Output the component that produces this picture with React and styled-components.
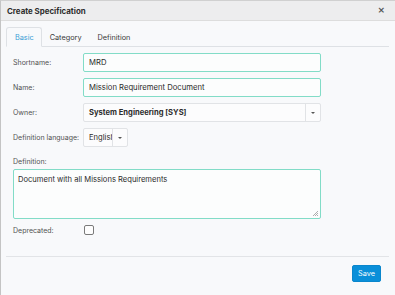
import styled, { createGlobalStyle } from 'styled-components';

const GlobalStyle = createGlobalStyle`
    html, body {
        margin: 0;
        padding: 0;
        background: #ffffff;
    }
    * {
        box-sizing: border-box;
    }
`;

const Dialog = styled.div`
    display: flex;
    flex-direction: column;
    width: 395px;
    height: 295px;
    overflow: hidden;

    background: #f8f9fb;
    border-left: 1px solid #c4c4c4;
    border-top: 1px solid #d0d0d0;

    font-family: Inter, 'Noto Sans', sans-serif;
    color: #333;
`;

const Header = styled.div`
    display: flex;
    justify-content: space-between;
    align-items: center;
    flex: 0 0 20px;
    padding: 0 10px 0 6px;

    background: #ededee;
    border-bottom: 1px solid #dddddd;
`;

const Title = styled.h1`
    margin: 0;
    font-size: 7.9px;
    font-weight: 700;
    color: #2d2d2d;
`;

const CloseButton = styled.button`
    padding: 0;
    background: none;
    border: none;
    font-family: 'DejaVu Sans', sans-serif;
    font-size: 9px;
    font-weight: 700;
    line-height: 1;
    color: #555;
`;

const Body = styled.div`
    flex: 1;
    padding: 6px 6px 0 5px;
`;

const TabList = styled.div`
    display: flex;
    height: 20px;
    border-bottom: 1px solid #dee1e5;
`;

const Tab = styled.div`
    display: flex;
    align-items: center;
    height: 20px;
    padding: 0 7px;
    margin-bottom: -1px;

    font-size: 7.3px;
    color: ${({ $active }) => ($active ? '#3a9fd6' : '#3a3a3a')};
    background: ${({ $active }) => ($active ? '#f8f9fb' : 'transparent')};
    border: 1px solid ${({ $active }) => ($active ? '#dee1e5' : 'transparent')};
    border-bottom-color: ${({ $active }) => ($active ? '#f8f9fb' : 'transparent')};
    border-radius: 3px 3px 0 0;

    &:first-child {
        padding-left: 8px;
    }
`;

const Form = styled.div`
    display: flex;
    flex-direction: column;
    gap: 6px;
    padding: 6px 0 0 7px;
    height: 209px;
`;

const Row = styled.div`
    display: flex;
    align-items: center;
`;

const Label = styled.label`
    flex: 0 0 70px;
    font-size: 7px;
    color: #525252;
    white-space: nowrap;
`;

const TextInput = styled.div`
    display: flex;
    align-items: center;
    width: 238px;
    height: 19px;
    padding: 0 5px;

    font-size: 7.7px;
    color: #2b2b2b;
    background: #fcfdfd;
    border: 1px solid #82dcc7;
    border-radius: 2px;
`;

const Select = styled.div`
    display: flex;
    align-items: stretch;
    width: ${({ $width }) => $width}px;
    height: 19px;

    background: #fcfcfd;
    border: 1px solid #e1e3e6;
    border-radius: 2px;
`;

const SelectValue = styled.div`
    flex: 1;
    display: flex;
    align-items: center;
    padding: 0 5px;
    overflow: hidden;
    white-space: nowrap;

    font-size: 7.6px;
    font-weight: ${({ $bold }) => ($bold ? 700 : 400)};
    color: #2b2b2b;
`;

const Caret = styled.div`
    display: flex;
    align-items: center;
    justify-content: center;
    flex: 0 0 15px;
    border-left: 1px solid #e1e3e6;

    &::after {
        content: '';
        border-left: 2.5px solid transparent;
        border-right: 2.5px solid transparent;
        border-top: 2.5px solid #555;
    }
`;

const DefinitionLabel = styled.div`
    margin-top: 4px;
    font-size: 7px;
    color: #525252;
`;

const TextArea = styled.div`
    position: relative;
    width: 308px;
    height: 50px;
    margin-top: -3px;
    padding: 5px 4px;

    font-size: 7.6px;
    color: #2b2b2b;
    background: #fcfdfd;
    border: 1px solid #82dcc7;
    border-radius: 2px;
`;

const ResizeGrip = styled.svg`
    position: absolute;
    right: 1px;
    bottom: 1px;
`;

const Checkbox = styled.div`
    width: 10px;
    height: 10px;
    margin-left: 1px;
    background: #fdfdfd;
    border: 1px solid #7a7a7a;
    border-radius: 2px;
`;

const Footer = styled.div`
    display: flex;
    justify-content: flex-end;
    padding: 8px 8px 0 0;
    border-top: 1px solid #e2e4e7;
`;

const SaveButton = styled.button`
    width: 29px;
    height: 17px;
    padding: 0;

    font-family: Inter, 'Noto Sans', sans-serif;
    font-size: 7.3px;
    color: #ffffff;
    background: #0a8fd9;
    border: 1px solid #0a86cc;
    border-radius: 2px;
`;

const App = () => {
    return (
        <>
            <GlobalStyle />
            <Dialog>
                <Header>
                    <Title>Create Specification</Title>
                    <CloseButton>×</CloseButton>
                </Header>
                <Body>
                    <TabList>
                        <Tab $active>Basic</Tab>
                        <Tab>Category</Tab>
                        <Tab>Definition</Tab>
                    </TabList>
                    <Form>
                        <Row>
                            <Label>Shortname:</Label>
                            <TextInput>MRD</TextInput>
                        </Row>
                        <Row>
                            <Label>Name:</Label>
                            <TextInput>Mission Requirement Document</TextInput>
                        </Row>
                        <Row>
                            <Label>Owner:</Label>
                            <Select $width={238}>
                                <SelectValue $bold>System Engineering [SYS]</SelectValue>
                                <Caret />
                            </Select>
                        </Row>
                        <Row>
                            <Label>Definition language:</Label>
                            <Select $width={45}>
                                <SelectValue>English</SelectValue>
                                <Caret />
                            </Select>
                        </Row>
                        <DefinitionLabel>Definition:</DefinitionLabel>
                        <TextArea>
                            Document with all Missions Requirements
                            <ResizeGrip width="7" height="7" viewBox="0 0 7 7">
                                <path d="M6 1L1 6M6 3L3 6M6 5L5 6" stroke="#999" strokeWidth="0.8" />
                            </ResizeGrip>
                        </TextArea>
                        <Row>
                            <Label>Deprecated:</Label>
                            <Checkbox />
                        </Row>
                    </Form>
                    <Footer>
                        <SaveButton>Save</SaveButton>
                    </Footer>
                </Body>
            </Dialog>
        </>
    );
};

export default App;
